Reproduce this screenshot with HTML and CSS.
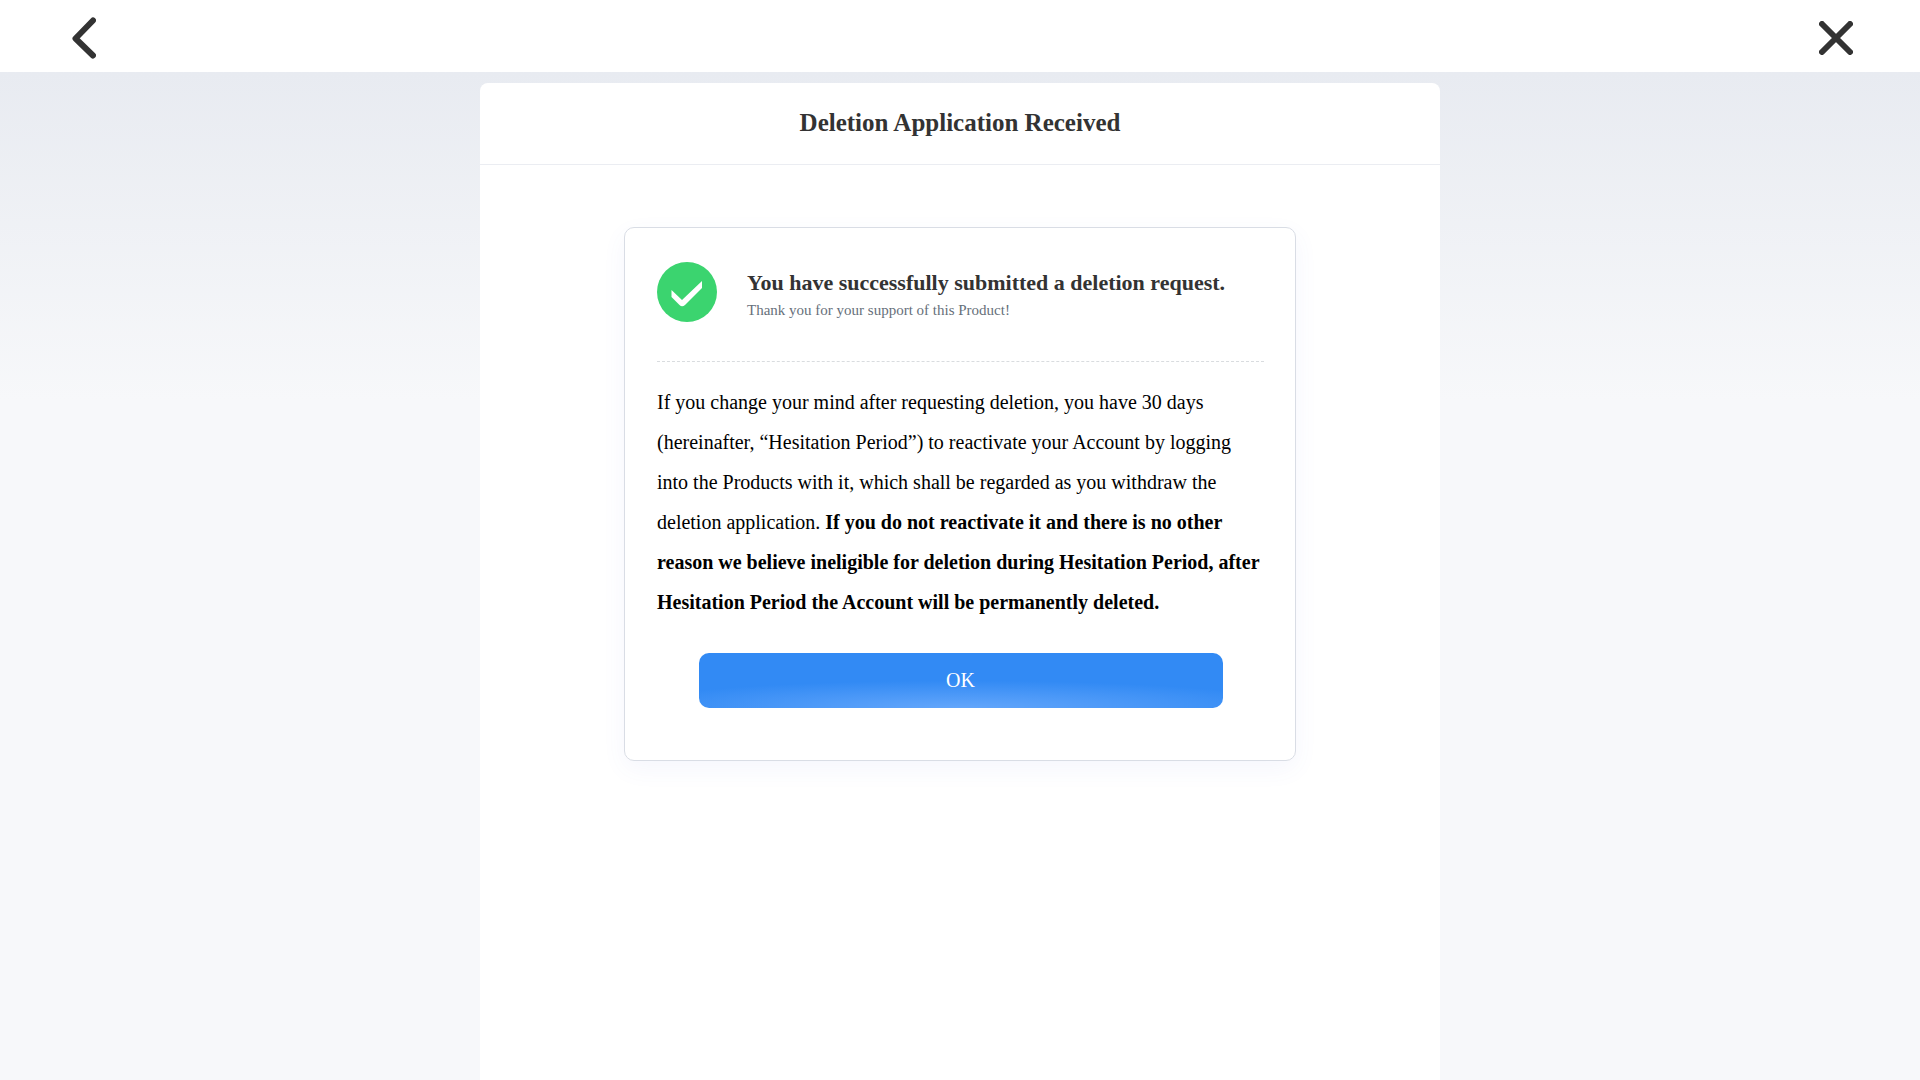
FILE: index.html
```html
<!DOCTYPE html>
<html lang="en">
<head>
  <meta charset="UTF-8">
  <meta name="viewport" content="width=device-width, initial-scale=1.0">
  <title>Deletion Application Received</title>
  <link rel="stylesheet" href="styles.css">
</head>
<body>
  <header class="topbar">
    <button class="icon-btn" type="button" aria-label="Back">
      <svg width="24" height="42" viewBox="0 0 24 42">
        <path d="M21 3.500 3.500 21.500 21 38.500" />
      </svg>
    </button>
    <button class="icon-btn" type="button" aria-label="Close">
      <svg width="34" height="34" viewBox="0 0 34 34">
        <path d="M3 3 31 31M31 3 3 31" />
      </svg>
    </button>
  </header>

  <main class="panel">
    <h1 class="panel-title">Deletion Application Received</h1>

    <section class="card">
      <div class="status">
        <svg class="status-icon" width="60" height="60" viewBox="0 0 60 60">
          <circle cx="30" cy="30" r="30" fill="#3bd46f" />
          <path d="M14.500 28 25 38 45 19V26L28 43Q25 45.500 22.500 43L14.500 35Z" fill="#fff" />
        </svg>
        <div class="status-text">
          <h2>You have successfully submitted a deletion request.</h2>
          <p>Thank you for your support of this Product!</p>
        </div>
      </div>

      <p class="notice">
        If you change your mind after requesting deletion, you have 30 days (hereinafter, “Hesitation Period”) to reactivate your Account by logging into the Products with it, which shall be regarded as you withdraw the deletion application.
        <strong>If you do not reactivate it and there is no other reason we believe ineligible for deletion during Hesitation Period, after Hesitation Period the Account will be permanently deleted.</strong>
      </p>

      <button class="ok-btn" type="button">OK</button>
    </section>
  </main>
</body>
</html>
```

FILE: styles.css
```css
* {
  box-sizing: border-box;
}

body {
  margin: 0;
  min-height: 100vh;
  display: flex;
  flex-direction: column;
  font-family: "Liberation Serif", "Times New Roman", serif;
  color: #333;
  background: #f7f8fa linear-gradient(#e8ebf1 72px, #f7f8fa 400px) no-repeat;
}

h1, h2, p {
  margin: 0;
}

button {
  border: none;
  font-family: inherit;
  cursor: pointer;
}

/* Top bar */
.topbar {
  height: 72px;
  padding: 4px 67px 0 72px;
  display: flex;
  align-items: center;
  justify-content: space-between;
  background: #fff;
}

.icon-btn {
  display: flex;
  padding: 0;
  background: none;
}

.icon-btn path {
  fill: none;
  stroke: #333;
  stroke-width: 6;
  stroke-linecap: round;
  stroke-linejoin: round;
}

/* White page panel */
.panel {
  flex: 1;
  width: 50%;
  margin: 11px auto 0;
  background: #fff;
  border-radius: 8px 8px 0 0;
}

.panel-title {
  padding: 24px 0 25px;
  border-bottom: 1px solid #ebedf2;
  font-size: 25px;
  line-height: 32px;
  text-align: center;
}

.card {
  width: 70%;
  margin: 62px auto;
  padding: 34px 31px 52px 32px;
  border: 1px solid #d9dde5;
  border-radius: 10px;
  box-shadow: 0 8px 24px rgba(80, 110, 220, 0.06);
}

/* Result row */
.status {
  display: flex;
  align-items: center;
  gap: 30px;
  padding-bottom: 39px;
  border-bottom: 1px dashed #d9dcdf;
}

.status-icon {
  flex: none;
}

.status-text {
  padding-top: 6px;
}

.status h2 {
  font-size: 22px;
  line-height: 30px;
}

.status p {
  font-size: 15px;
  line-height: 24px;
  color: #666f7a;
}

.notice {
  margin: 20px 0 31px;
  font-size: 20px;
  line-height: 40px;
  color: #000;
}

.ok-btn {
  display: block;
  width: 524px;
  max-width: 100%;
  height: 55px;
  margin: 0 auto;
  border-radius: 10px;
  font-size: 20px;
  color: #fff;
  background: #328af4 radial-gradient(ellipse 65% 50% at 50% 100%, #63a6fb, #328af4);
}
```
